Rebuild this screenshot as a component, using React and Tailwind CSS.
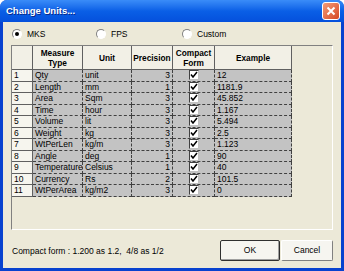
import React from "react";

const rows = [
    ["1", "Qty", "unit", "3", "12"],
    ["2", "Length", "mm", "1", "1181.9"],
    ["3", "Area", "Sqm", "3", "45.852"],
    ["4", "Time", "hour", "3", "1.167"],
    ["5", "Volume", "lit", "3", "5.494"],
    ["6", "Weight", "kg", "3", "2.5"],
    ["7", "WtPerLen", "kg/m", "3", "1.123"],
    ["8", "Angle", "deg", "1", "90"],
    ["9", "Temperature", "Celsius", "1", "40"],
    ["10", "Currency", "Rs", "2", "101.5"],
    ["11", "WtPerArea", "kg/m2", "3", "0"],
];

function Radio({ checked, label }) {
    return (
        <div className="flex items-center gap-[5px]">
            <div className="w-[10px] h-[10px] rounded-full border border-[#808080] border-r-white border-b-white bg-white flex items-center justify-center">
                {checked && <div className="w-[4px] h-[4px] rounded-full bg-black" />}
            </div>
            <span>{label}</span>
        </div>
    );
}

function Check() {
    return (
        <div className="w-[10px] h-[10px] bg-white border border-[#404040] border-r-[#c0c0c0] border-b-[#c0c0c0] flex items-center justify-center">
            <svg width="8" height="8" viewBox="0 0 8 8">
                <path d="M1 3.5 L3 6 L7 1" stroke="black" strokeWidth="1.5" fill="none" />
            </svg>
        </div>
    );
}

const headCell = "bg-[#f2f0e6] border-r border-b border-[#606060] flex items-center justify-center";
const dataCell = "border-r border-b border-dashed border-[#404040] bg-[#c3c3c3] px-[2px] flex items-center overflow-hidden whitespace-nowrap";

export default function App() {
    return (
        <div
            className="w-[344px] h-[271px] bg-[#0842cf] flex flex-col rounded-t-[7px] overflow-hidden text-[8.5px] text-black"
            style={{ fontFamily: "'Liberation Sans', Arial, sans-serif" }}
        >
            {/* title bar */}
            <div className="h-[22px] shrink-0 flex items-center justify-between pl-[6px] pr-[4px] bg-gradient-to-b from-[#3a8cf8] via-[#0a5fe6] to-[#0550dc]">
                <span className="text-white font-bold text-[9.5px] [text-shadow:1px_1px_0_#0a2a8a]">Change Units...</span>
                <div className="w-[18px] h-[18px] rounded-[3px] border border-white bg-gradient-to-br from-[#f39b78] to-[#d5441c] flex items-center justify-center">
                    <svg width="10" height="10" viewBox="0 0 10 10">
                        <path d="M1.5 1.5 L8.5 8.5 M8.5 1.5 L1.5 8.5" stroke="white" strokeWidth="2" />
                    </svg>
                </div>
            </div>

            {/* body */}
            <div className="flex-1 mx-[3px] mb-[3px] bg-[#ece9d8] flex flex-col px-[8px]">
                <div className="flex items-center h-[22px] mt-[1px] pl-[1px]">
                    <div className="w-[84px]"><Radio checked label="MKS" /></div>
                    <div className="w-[86px]"><Radio label="FPS" /></div>
                    <Radio label="Custom" />
                </div>

                <div className="h-[185px] border border-[#808080] border-r-white border-b-white bg-[#ece9d8] flex flex-col text-[8.5px]">
                    <div className="flex h-[24px] font-bold text-center leading-[10px] text-[8.3px]">
                        <div className={`w-[21px] ${headCell}`} />
                        <div className={`w-[50px] ${headCell}`}>Measure<br />Type</div>
                        <div className={`w-[49px] ${headCell}`}>Unit</div>
                        <div className={`w-[41px] ${headCell}`}>Precision</div>
                        <div className={`w-[42px] ${headCell}`}>Compact<br />Form</div>
                        <div className={`w-[77px] ${headCell}`}>Example</div>
                    </div>
                    {rows.map((r) => (
                        <div key={r[0]} className="flex h-[11.5px] leading-none">
                            <div className="w-[21px] bg-[#f6f5ee] border-r border-b border-[#606060] px-[2px] flex items-center">{r[0]}</div>
                            <div className={`w-[50px] ${dataCell}`}>{r[1]}</div>
                            <div className={`w-[49px] ${dataCell}`}>{r[2]}</div>
                            <div className={`w-[41px] ${dataCell} justify-end`}>{r[3]}</div>
                            <div className={`w-[42px] ${dataCell} justify-center`}><Check /></div>
                            <div className={`w-[77px] ${dataCell}`}>{r[4]}</div>
                        </div>
                    ))}
                </div>

                <div className="flex items-end justify-between mt-auto mb-[7px]">
                    <span className="mb-[3px] pl-[1px]">Compact form : 1.200 as 1.2,&nbsp; 4/8 as 1/2</span>
                    <div className="flex gap-[1px]">
                        <button className="w-[60px] h-[21px] bg-[#f6f5f0] border border-[#303030] rounded-[2px] shadow-[inset_-1px_-1px_0_#a0a0a0]">OK</button>
                        <button className="w-[52px] h-[21px] bg-[#f6f5f0] border border-[#808080] border-t-white border-l-white rounded-[2px]">Cancel</button>
                    </div>
                </div>
            </div>
        </div>
    );
}
